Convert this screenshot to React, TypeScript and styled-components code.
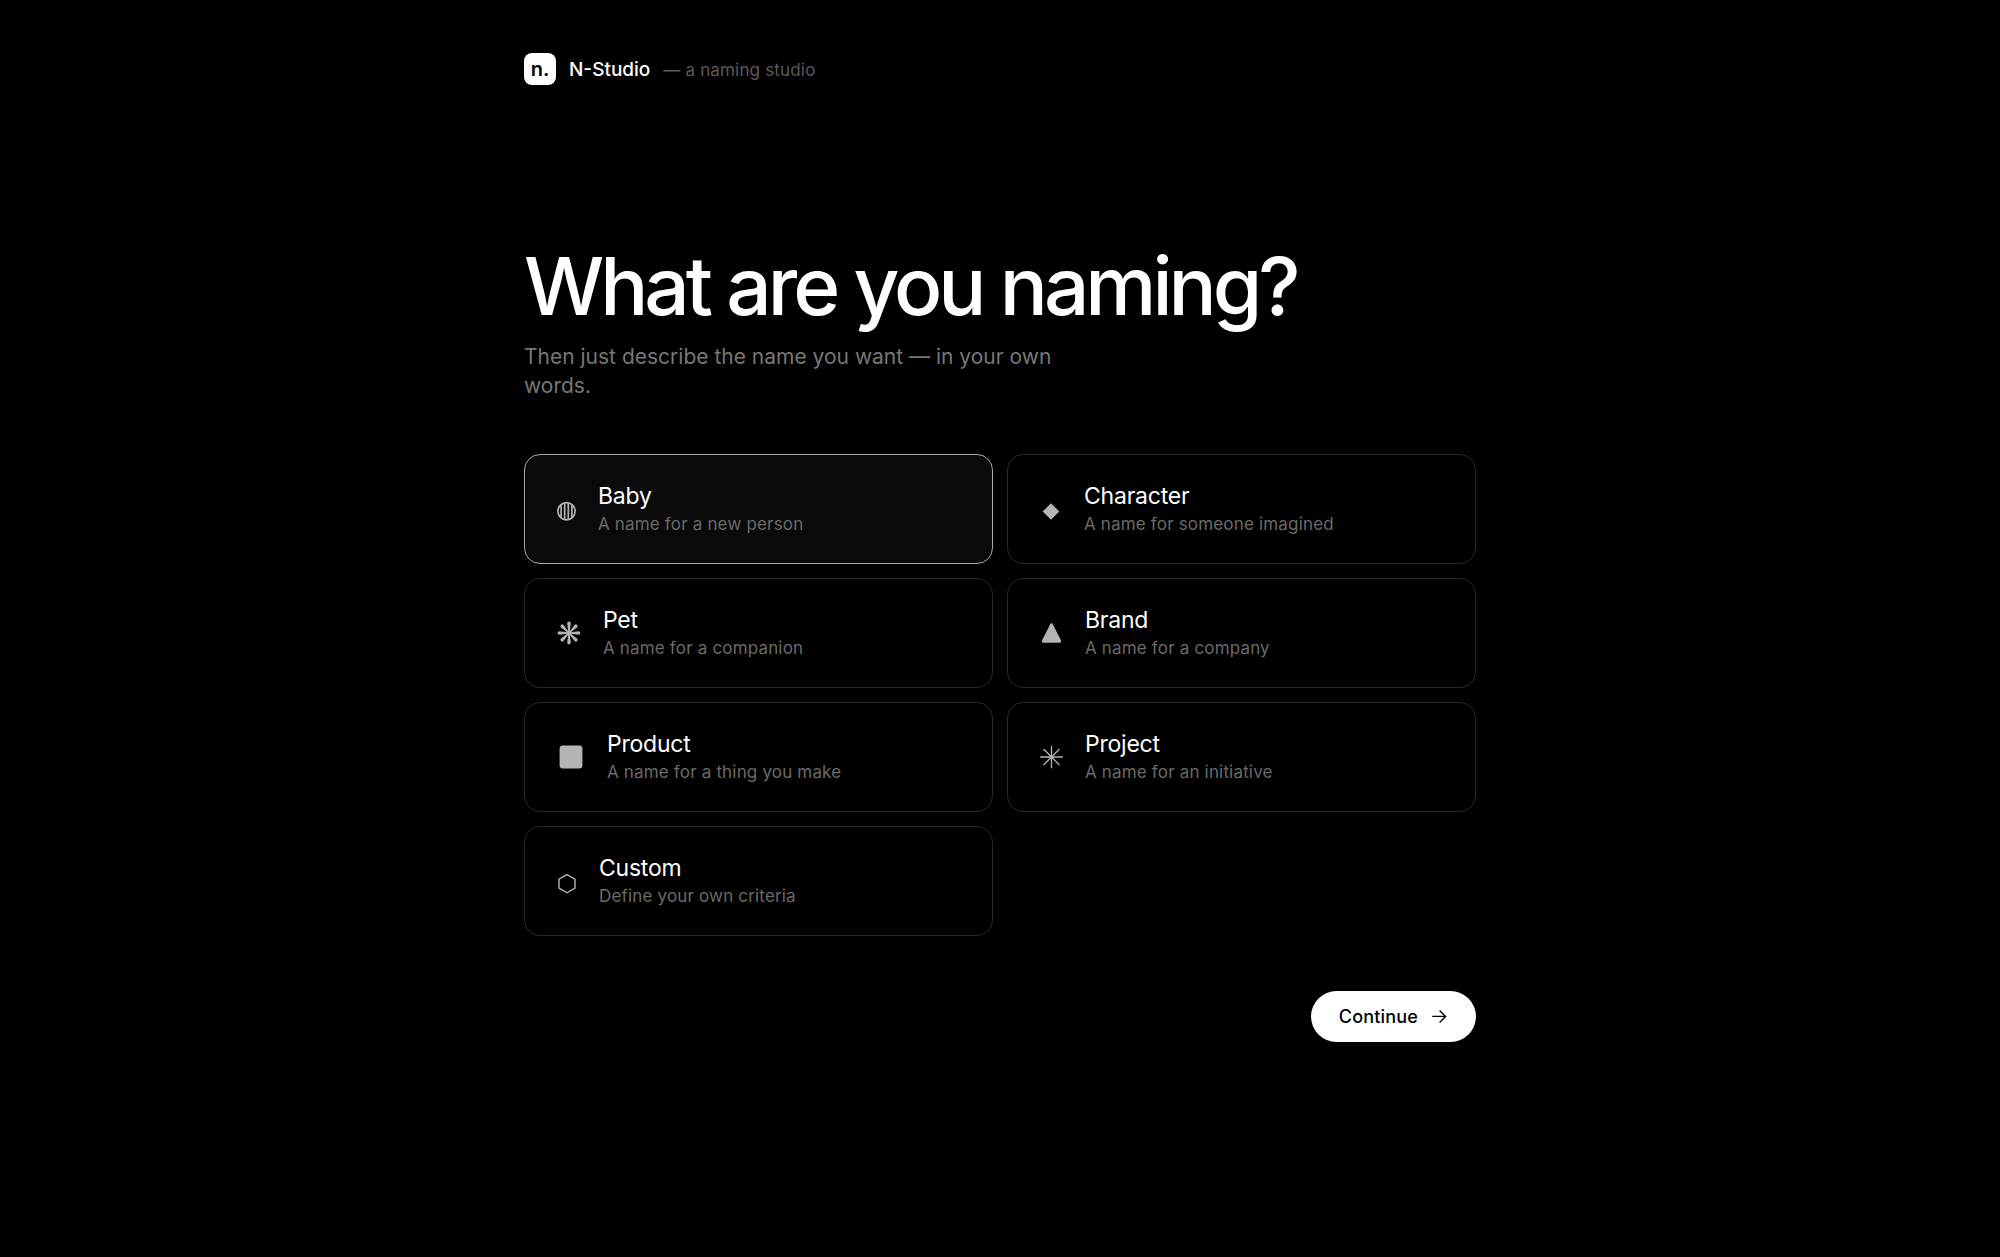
import React, { useState } from "react";
import styled, { createGlobalStyle } from "styled-components";

const GlobalStyle = createGlobalStyle`
  *, *::before, *::after { box-sizing: border-box; }
  body {
    margin: 0;
    min-height: 100vh;
    background: #000;
    color: #fff;
    font-family: Inter, "Liberation Sans", sans-serif;
    -webkit-font-smoothing: antialiased;
  }
`;

const Page = styled.main`
  max-width: 1000px;
  margin: 0 auto;
  padding: 53px 24px;
`;

const Header = styled.header`
  display: flex;
  align-items: flex-start;
  gap: 13px;
  margin-bottom: 157px;
`;

const Logo = styled.span`
  display: flex;
  align-items: center;
  justify-content: center;
  width: 32px;
  height: 32px;
  border-radius: 8px;
  background: #fff;
  color: #000;
  font-size: 20px;
  font-weight: 600;
  line-height: 32px;
`;

const BrandName = styled.span`
  font-size: 19px;
  font-weight: 500;
  line-height: 34px;
`;

const Tagline = styled.span`
  font-size: 17px;
  line-height: 34px;
  letter-spacing: 0.01em;
  color: #5a5a5a;
`;

const Title = styled.h1`
  margin: 0 0 14px;
  font-size: 80px;
  font-weight: 500;
  line-height: 84px;
  letter-spacing: -0.05em;
`;

const Lead = styled.p`
  max-width: 560px;
  margin: 0 0 54px;
  font-size: 21px;
  line-height: 29px;
  color: #777;
`;

const Options = styled.fieldset`
  display: grid;
  grid-template-columns: repeat(auto-fit, minmax(340px, 1fr));
  gap: 14px;
  min-width: 0;
  margin: 0 0 55px;
  padding: 0;
  border: 0;
`;

const Card = styled.label<{ $selected: boolean }>`
  display: flex;
  align-items: center;
  gap: 19px;
  padding: 27px 29px;
  border: 1px solid ${(p) => (p.$selected ? "#a8a8a8" : "#282828")};
  border-radius: 16px;
  background: ${(p) => (p.$selected ? "#0a0a0a" : "transparent")};
  cursor: pointer;
`;

const HiddenRadio = styled.input`
  position: absolute;
  opacity: 0;
  pointer-events: none;
`;

const CardText = styled.span`
  display: flex;
  flex-direction: column;
  gap: 2px;
`;

const CardName = styled.span`
  font-size: 23px;
  line-height: 28px;
  letter-spacing: -0.01em;
`;

const CardNote = styled.span`
  font-size: 17px;
  line-height: 24px;
  letter-spacing: 0.01em;
  color: #6a6a6a;
`;

const Glyph = styled.svg`
  flex: none;
  display: block;
  color: #b4b4b4;
`;

const Actions = styled.div`
  display: flex;
  justify-content: flex-end;
`;

const ContinueButton = styled.button`
  display: inline-flex;
  align-items: center;
  gap: 14px;
  padding: 14px 28px;
  border: 0;
  border-radius: 26px;
  background: #fff;
  color: #000;
  font: 500 18px/23px Inter, "Liberation Sans", sans-serif;
  letter-spacing: 0.01em;
  cursor: pointer;
`;

const rays = [0, 45, 90, 135, 180, 225, 270, 315];

type Option = { id: string; name: string; note: string; width: number; art: React.ReactNode };

/* Every drawing is centred on 0,0 in a 34px tall box. */
const options: Option[] = [
  {
    id: "baby", name: "Baby", note: "A name for a new person", width: 25,
    art: (
      <g fill="none" stroke="currentColor" strokeWidth="1.7">
        <circle cx="0" cy="2.3" r="8.6" />
        <path d="M-5.4 -4.4V9M-1.8 -6.2V10.8M1.8 -6.2V10.8M5.4 -4.4V9" />
      </g>
    ),
  },
  {
    id: "character", name: "Character", note: "A name for someone imagined", width: 28,
    art: <path fill="currentColor" d="M0 -5.8L8.3 2.5L0 10.8L-8.3 2.5Z" />,
  },
  {
    id: "pet", name: "Pet", note: "A name for a companion", width: 30,
    art: (
      <g fill="currentColor">
        {rays.map((a) => (
          <path key={a} transform={`rotate(${a})`} d="M-0.5 0L-1.8 -9.6A1.8 1.8 0 0 1 1.8 -9.6L0.5 0Z" />
        ))}
        <circle r="2.6" />
      </g>
    ),
  },
  {
    id: "brand", name: "Brand", note: "A name for a company", width: 29,
    art: (
      <path
        fill="currentColor" stroke="currentColor" strokeWidth="3" strokeLinejoin="round"
        d="M0 -8.2L8.2 8.2H-8.2Z"
      />
    ),
  },
  {
    id: "product", name: "Product", note: "A name for a thing you make", width: 34,
    art: <rect x="-11.4" y="-11.4" width="22.8" height="22.8" rx="3" fill="currentColor" />,
  },
  {
    id: "project", name: "Project", note: "A name for an initiative", width: 29,
    art: (
      <path
        fill="none" stroke="currentColor" strokeWidth="1.3"
        d="M0 -11.3V11.3M-11.3 0H11.3M-8 -8L8 8M8 -8L-8 8"
      />
    ),
  },
  {
    id: "custom", name: "Custom", note: "Define your own criteria", width: 26,
    art: (
      <path
        fill="none" stroke="currentColor" strokeWidth="1.4"
        d="M0 -6.4L8 -1.8V7.2L0 11.8L-8 7.2V-1.8Z"
      />
    ),
  },
];

export default function App() {
  const [selected, setSelected] = useState("baby");
  return (
    <>
      <GlobalStyle />
      <Page>
        <Header>
          <Logo>n.</Logo>
          <BrandName>N-Studio</BrandName>
          <Tagline>— a naming studio</Tagline>
        </Header>
        <Title>What are you naming?</Title>
        <Lead>Then just describe the name you want — in your own words.</Lead>
        <Options aria-label="What are you naming?">
          {options.map((o) => (
            <Card key={o.id} htmlFor={o.id} $selected={selected === o.id}>
              <HiddenRadio
                type="radio"
                id={o.id}
                name="kind"
                checked={selected === o.id}
                onChange={() => setSelected(o.id)}
              />
              <Glyph width={o.width} height="34" viewBox={`${-o.width / 2} -17 ${o.width} 34`} aria-hidden="true">
                {o.art}
              </Glyph>
              <CardText>
                <CardName>{o.name}</CardName>
                <CardNote>{o.note}</CardNote>
              </CardText>
            </Card>
          ))}
        </Options>
        <Actions>
          <ContinueButton type="button">
            Continue
            <svg width="16" height="16" viewBox="0 0 16 16" fill="none" stroke="currentColor" strokeWidth="1.4" aria-hidden="true">
              <path d="M0.2 7.4H13.4M7.6 1.4L13.6 7.4L7.6 13.4" />
            </svg>
          </ContinueButton>
        </Actions>
      </Page>
    </>
  );
}
